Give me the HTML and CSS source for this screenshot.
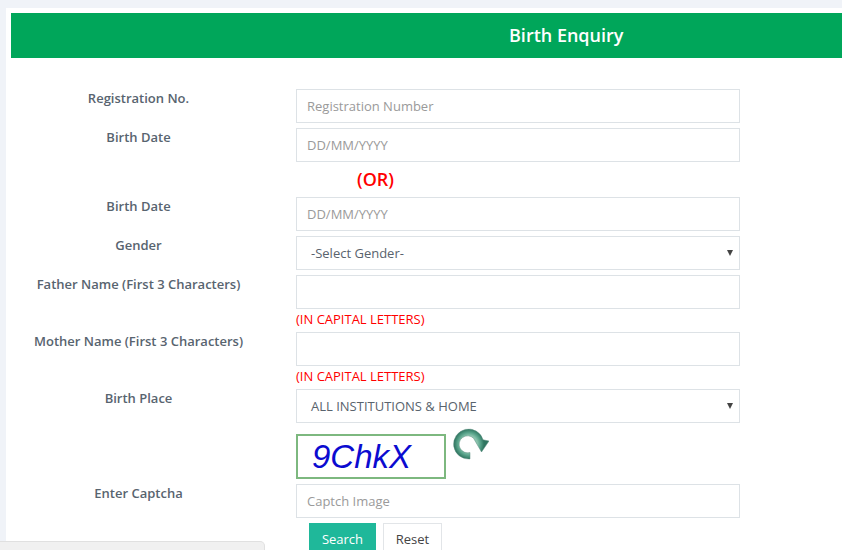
FILE: index.html
```html
<!DOCTYPE html>
<html lang="en">
<head>
<meta charset="utf-8">
<title>Birth Enquiry</title>
<link rel="stylesheet" href="styles.css">
</head>
<body>
<main class="card">
  <h1 class="banner">Birth Enquiry</h1>
  <form class="form">
    <div class="row">
      <label class="label">Registration No.</label>
      <input class="field" placeholder="Registration Number">
    </div>
    <div class="row">
      <label class="label">Birth Date</label>
      <input class="field" placeholder="DD/MM/YYYY">
    </div>
    <div class="or">(OR)</div>
    <div class="row">
      <label class="label">Birth Date</label>
      <input class="field" placeholder="DD/MM/YYYY">
    </div>
    <div class="row">
      <label class="label">Gender</label>
      <div class="select"><span>-Select Gender-</span><i class="arrow"></i></div>
    </div>
    <div class="row">
      <label class="label">Father Name (First 3 Characters)</label>
      <input class="field">
    </div>
    <div class="hint">(IN CAPITAL LETTERS)</div>
    <div class="row">
      <label class="label">Mother Name (First 3 Characters)</label>
      <input class="field">
    </div>
    <div class="hint">(IN CAPITAL LETTERS)</div>
    <div class="row">
      <label class="label">Birth Place</label>
      <div class="select"><span>ALL INSTITUTIONS &amp; HOME</span><i class="arrow"></i></div>
    </div>
    <div class="captcha-row">
      <div class="captcha">9ChkX</div>
      <svg class="refresh" width="36" height="34" viewBox="0 0 36 34" aria-hidden="true">
        <defs>
          <radialGradient id="arc" cx="16" cy="17" r="15" gradientUnits="userSpaceOnUse">
            <stop offset="0.55" stop-color="#8cc4ae"/>
            <stop offset="0.75" stop-color="#5aa58c"/>
            <stop offset="1" stop-color="#2f7560"/>
          </radialGradient>
        </defs>
        <path d="M17 32A15 15 0 1 1 30 12.800L36 14L28.500 25L20.500 11.200A8.500 8.500 0 1 0 17 25.500Z" fill="url(#arc)" stroke="#5c8f80" stroke-width="0.500"/>
      </svg>
    </div>
    <div class="row">
      <label class="label">Enter Captcha</label>
      <input class="field" placeholder="Captch Image">
    </div>
    <div class="actions">
      <button type="button" class="btn btn-search">Search</button>
      <button type="button" class="btn btn-reset">Reset</button>
    </div>
  </form>
</main>
<div class="dock"></div>
</body>
</html>
```
FILE: styles.css
```css
* { box-sizing: border-box; }
html, body { height: 100%; }
body {
  margin: 0;
  height: 550px;
  overflow: hidden;
  background: #f0f3f8;
  font-family: "Open Sans", sans-serif;
  position: relative;
}
.card {
  margin: 8px 0 0 6px;
  padding: 5px 0 0 5px;
  background: #fff;
  height: 542px;
}
.banner {
  margin: 0;
  height: 45px;
  background: #00a65a;
  color: #fff;
  font-size: 18px;
  font-weight: 600;
  line-height: 45px;
  padding-left: 498px;
}
.form {
  display: flex;
  flex-direction: column;
  padding-top: 31px;
}
.row {
  display: grid;
  grid-template-columns: 255px 444px;
  column-gap: 30px;
  margin-bottom: 5px;
}
.label {
  text-align: center;
  font-size: 13px;
  font-weight: 600;
  line-height: 18px;
  color: #58646f;
}
.field, .select {
  width: 444px;
  height: 34px;
  border: 1px solid #dde2e6;
  background: #fff;
  font-family: inherit;
  font-size: 13px;
  color: #59636d;
  outline: none;
  border-radius: 0;
}
.field { padding: 0 10px; }
.field::placeholder { color: #9a9a9a; opacity: 1; }
.select {
  display: flex;
  align-items: center;
  justify-content: space-between;
  padding: 0 6px 0 14px;
}
.arrow {
  width: 0;
  height: 0;
  border-left: 3.500px solid transparent;
  border-right: 3.500px solid transparent;
  border-top: 6px solid #444;
}
.or {
  height: 30px;
  margin: 0 0 0 346px;
  color: #f00;
  font-size: 18px;
  font-weight: 600;
  line-height: 24px;
}
.hint {
  margin: -3px 0 0 285px;
  height: 21px;
  color: #f00;
  font-size: 13px;
  font-weight: 400;
  line-height: 16px;
  white-space: nowrap;
}
.captcha-row {
  display: flex;
  align-items: flex-start;
  margin: 6px 0 5px 285px;
  height: 45px;
}
.captcha {
  width: 150px;
  height: 45px;
  border: 2px solid #7db87f;
  padding-left: 14px;
  font-family: "Liberation Sans", Arial, sans-serif;
  font-style: italic;
  font-size: 33px;
  line-height: 41px;
  color: #0b0bd0;
}
.refresh {
  margin: -7px 0 0 7px;
}
.actions {
  display: flex;
  gap: 7px;
  margin-left: 298px;
}
.btn {
  height: 34px;
  font-family: inherit;
  font-size: 13px;
  padding: 0 0 2px;
  border-radius: 0;
}
.btn-search {
  width: 67px;
  border: 1px solid #1fb89a;
  background: #1fb89a;
  color: #fff;
}
.btn-reset {
  width: 59px;
  border: 1px solid #e2e5e8;
  background: #fff;
  color: #444;
}
.dock {
  position: absolute;
  left: 0;
  top: 541px;
  width: 265px;
  height: 20px;
  background: #f0f0f0;
  border: 1px solid #e0e0e0;
  border-left: 0;
  border-radius: 0 5px 0 0;
}
```
